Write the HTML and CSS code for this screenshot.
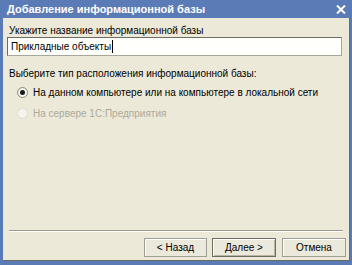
FILE: index.html
```html
<!DOCTYPE html>
<html>
<head>
<meta charset="utf-8">
<link rel="stylesheet" href="styles.css">
</head>
<body>
<div class="window">
  <div class="titlebar">
    <span class="title">Добавление информационной базы</span>
    <svg class="close" width="10" height="9" viewBox="0 0 10 9"><path d="M1 0.5 L9 8.5 M9 0.5 L1 8.5" stroke="#fff" stroke-width="2"/></svg>
  </div>
  <div class="client">
    <div class="label">Укажите название информационной базы</div>
    <div class="input"><span>Прикладные объекты</span><span class="caret"></span></div>
    <div class="label label2">Выберите тип расположения информационной базы:</div>
    <div class="radio-row first"><span class="radio checked"></span><span>На данном компьютере или на компьютере в локальной сети</span></div>
    <div class="radio-row disabled"><span class="radio"></span><span>На сервере 1С:Предприятия</span></div>
    <div class="spacer"></div>
    <div class="separator"></div>
    <div class="buttons">
      <div class="btn">&lt; Назад</div>
      <div class="btn default">Далее &gt;</div>
      <div class="btn cancel">Отмена</div>
    </div>
  </div>
</div>
</body>
</html>
```
FILE: styles.css
```css
html, body {
  margin: 0;
  padding: 0;
}
body {
  width: 352px;
  height: 265px;
  overflow: hidden;
  font-family: "Liberation Sans", Arial, sans-serif;
  font-size: 10px;
  color: #000;
}
.window {
  width: 352px;
  height: 265px;
  background: #5b7bb7;
  display: flex;
  flex-direction: column;
  box-sizing: border-box;
}
.titlebar {
  height: 18px;
  flex: none;
  display: flex;
  align-items: center;
  justify-content: space-between;
  padding: 0 6px 0 7px;
  color: #fff;
}
.title {
  font-weight: bold;
  font-size: 11px;
  line-height: 18px;
}
.close {
  display: block;
}
.client {
  flex: 1;
  margin: 0 2px 4px 3px;
  background: #ece9d8;
  border-right: 1px solid #6b6a60;
  border-bottom: 1px solid #6b6a60;
  display: flex;
  flex-direction: column;
  padding: 6px 0 3px 0;
}
.label {
  line-height: 13px;
  margin-left: 6px;
  white-space: nowrap;
}
.label2 {
  margin-top: 11px;
}
.input {
  margin: 0 7px 0 4px;
  height: 19px;
  box-sizing: border-box;
  background: #fffffb;
  border-style: solid;
  border-width: 1px;
  border-color: #6e6d65 #a7a69a #a7a69a #6e6d65;
  display: flex;
  align-items: center;
  padding-left: 3px;
  line-height: 13px;
}
.caret {
  width: 1px;
  height: 13px;
  background: #000;
  margin-left: 1px;
}
.radio-row {
  display: flex;
  align-items: center;
  height: 13px;
  margin-left: 14px;
  white-space: nowrap;
}
.radio-row.first {
  margin-top: 6px;
}
.radio-row + .radio-row {
  margin-top: 8px;
}
.radio {
  width: 11px;
  height: 11px;
  box-sizing: border-box;
  border-radius: 50%;
  border: 1px solid #8b8a7f;
  background: radial-gradient(circle at 65% 65%, #fff 0%, #f3f2ec 60%, #dcdad0 100%);
  margin-right: 5px;
  display: flex;
  align-items: center;
  justify-content: center;
}
.radio.checked::after {
  content: "";
  width: 5px;
  height: 5px;
  border-radius: 50%;
  background: #1a1a1a;
}
.disabled {
  color: #aca899;
}
.disabled .radio {
  border-color: #e0ded4;
  background: #f4f3ee;
}
.spacer {
  flex: 1;
}
.separator {
  height: 1px;
  margin: 0 6px 0 6px;
  background: #9d9a8a;
  border-bottom: 1px solid #fff;
}
.buttons {
  display: flex;
  justify-content: flex-end;
  gap: 5px;
  margin-top: 6px;
  padding-right: 3px;
}
.btn {
  width: 63px;
  height: 19px;
  box-sizing: border-box;
  border: 1px solid #a09e92;
  box-shadow: inset 1px 1px 0 #fff;
  background: #ebe8dc;
  display: flex;
  align-items: center;
  justify-content: center;
  line-height: 13px;
}
.btn.default {
  width: 64px;
  border-color: #6f6c5f;
  box-shadow: inset 1px 1px 0 #fff, inset -1px -1px 0 #b9b6a8;
}
.btn.cancel {
  width: 64px;
  margin-left: 1px;
}
```
